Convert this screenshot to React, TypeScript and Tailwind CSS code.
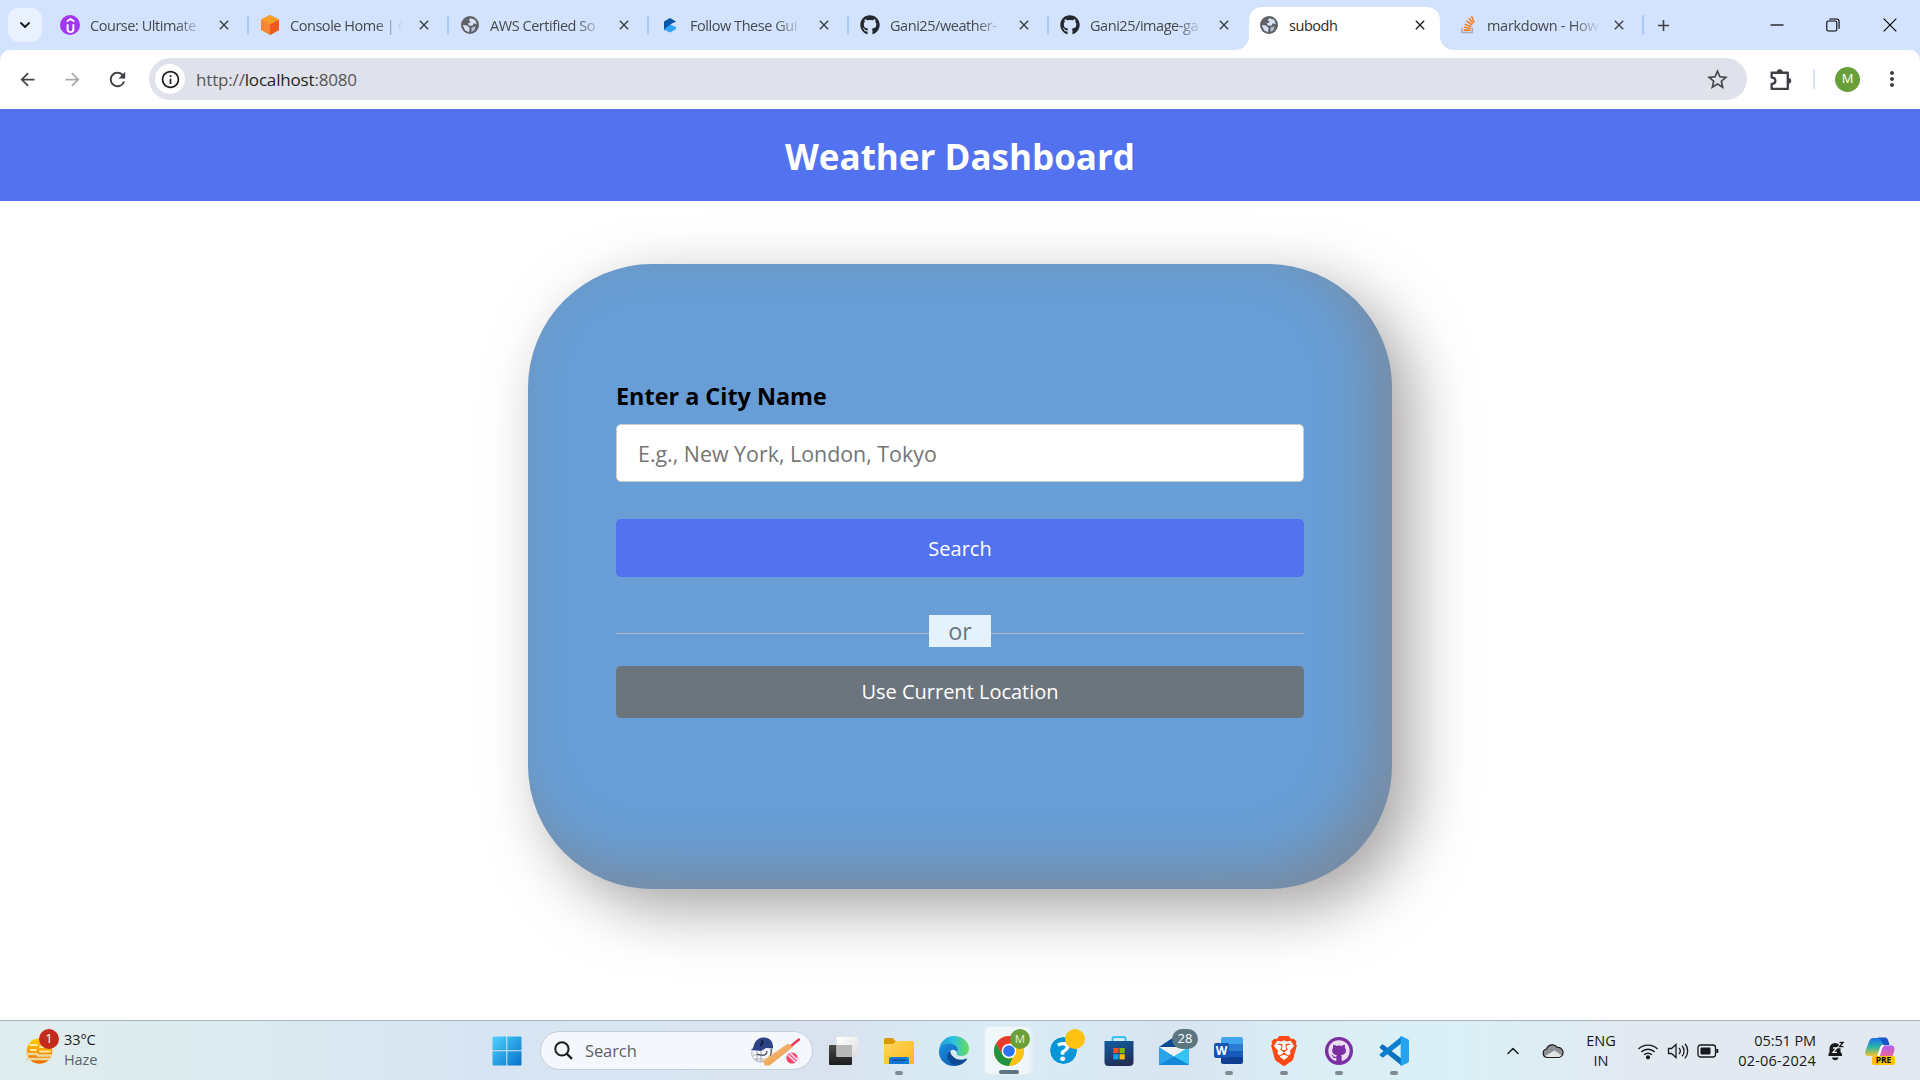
import React from 'react';
import {
  MdArrowBack,
  MdArrowForward,
  MdRefresh,
  MdInfoOutline,
  MdStarBorder,
  MdPublic,
  MdMoreVert,
  MdClose,
  MdAdd,
} from 'react-icons/md';
import { FaGithub } from 'react-icons/fa';
import { ChevronDown, ChevronUp } from 'lucide-react';
import { SiUdemy, SiBrave } from 'react-icons/si';

/* ---------- favicons ---------- */

function UdemyIcon() {
  return (
    <span className="flex size-5 items-center justify-center rounded-full bg-[#a435f0] text-white">
      <SiUdemy className="size-[15px]" />
    </span>
  );
}

function AwsBoxIcon() {
  return (
    <svg viewBox="0 0 20 20" className="size-5">
      <path d="M10 0 19 4.8V15L10 20 1 15V4.8Z" fill="#f58536" />
      <path d="M10 0 19 4.8 10 9.6 1 4.8Z" fill="#fd9b28" />
      <path d="M19 4.8V15L10 20V9.6Z" fill="#ef5a1c" />
    </svg>
  );
}

function GlobeIcon() {
  return (
    <svg viewBox="0 0 18 18" className="size-[18px]">
      <circle cx="9" cy="9" r="9" fill="#5f6368" />
      <path
        d="M9.200 2.200 14 3.800 15.800 8.200 12.500 7.200 11.500 9.800 8 9.400 6.800 7.200 9 6.800 9.400 5 7.600 4.600Z"
        fill="#d9e3f5"
      />
      <path d="M1.800 9 6 9.400 8.600 12 8 16.200 4 14.300Z" fill="#d9e3f5" />
      <path d="M10.500 11.500 14.500 10.500 13.500 14 10.500 16Z" fill="#d9e3f5" fillOpacity=".75" />
    </svg>
  );
}

function CodeIcon() {
  return (
    <svg viewBox="0 0 20 20" className="size-5">
      <path d="M10 3 16 6.500 11 9 9 13 4 15.500V6.500Z" fill="#0b55a5" />
      <path d="M16 12 10 9.600 4 14.500 10 17.500 16 14Z" fill="#2ea3fb" />
    </svg>
  );
}

function StackIcon() {
  return (
    <svg viewBox="0 0 20 20" className="size-5" fill="none">
      <path d="M3 12.500v5.500h11v-5.500" stroke="#a9adb1" strokeWidth="1.600" />
      <path
        d="M5 15.400h7.200M5.200 12.400l7.200.9M6 9.200l7 2.300M7.800 5.800l6.200 4M10.400 2.800l4.700 5.600M13.200.6l2.700 6.600"
        stroke="#f48024"
        strokeWidth="1.600"
      />
    </svg>
  );
}

function PuzzleIcon() {
  return (
    <svg viewBox="0 0 24 24" className="size-[25px]" fill="none" stroke="#3c3f43" strokeWidth="2.200" strokeLinejoin="round">
      <path d="M3.500 5.500H19V21H3.500V16.200c2.400 0 3.600-1.300 3.600-3s-1.200-3-3.600-3Z" />
      <path d="M9 5a2.300 2.300 0 0 1 4.600 0ZM19.500 11a2.300 2.300 0 0 1 0 4.600Z" fill="#3c3f43" stroke="#3c3f43" strokeWidth="1" />
    </svg>
  );
}

/* ---------- tab strip ---------- */

function Tab({
  icon,
  title,
  divider = true,
}: {
  icon: React.ReactNode;
  title: string;
  divider?: boolean;
}) {
  return (
    <div className="flex w-[200px] shrink-0 items-center pl-[13px]">
      <span className="flex w-[22px] shrink-0 justify-center">{icon}</span>
      <span className="mt-[2px] ml-[9px] w-[113px] shrink-0 text-[14.5px] tracking-[-0.45px] whitespace-nowrap text-[#46494d] [mask-image:linear-gradient(90deg,#000_76%,transparent_100%)]">
        {title}
      </span>
      <MdClose className="ml-[13px] size-4 shrink-0 text-[#3c3f43]" />
      {divider && <span className="ml-[15px] h-5 w-[2px] shrink-0 rounded bg-[#a8c7fa]" />}
    </div>
  );
}

function TabStrip() {
  return (
    <div className="flex h-[50px] bg-[#d3e2fd] pl-2">
      <div className="mt-2 flex h-[34px] w-[34px] shrink-0 items-center justify-center rounded-[11px] bg-[#e9f0fe]">
        <ChevronDown className="size-4 text-[#1f1f1f]" strokeWidth={3} />
      </div>
      <div className="ml-[4px] flex">
        <Tab icon={<UdemyIcon />} title="Course: Ultimate" />
        <Tab icon={<AwsBoxIcon />} title="Console Home | C" />
        <Tab icon={<GlobeIcon />} title="AWS Certified So" />
        <Tab icon={<CodeIcon />} title="Follow These Gui" />
        <Tab icon={<FaGithub className="size-5 text-[#24292f]" />} title="Gani25/weather-" />
        <Tab icon={<FaGithub className="size-5 text-[#24292f]" />} title="Gani25/image-ga" divider={false} />
      </div>
      {/* active tab with flared bottom corners */}
      <div className="flex w-[199px] shrink-0">
        <svg viewBox="0 0 14 14" className="-ml-[11px] size-[14px] shrink-0 self-end">
          <path d="M14 0V14H0A14 14 0 0 0 14 0Z" fill="#fff" />
        </svg>
        <div className="mt-[7px] flex w-[191px] shrink-0 items-center rounded-t-[13px] bg-white pb-[7px] pl-[11px]">
          <GlobeIcon />
          <span className="mt-[2px] ml-[11px] w-[113px] text-[14.5px] tracking-[-0.45px] text-[#27292c]">subodh</span>
          <MdClose className="ml-[10px] size-4 text-[#1f1f1f]" />
        </div>
        <svg viewBox="0 0 14 14" className="size-[14px] shrink-0 self-end">
          <path d="M0 0V14H14A14 14 0 0 1 0 0Z" fill="#fff" />
        </svg>
      </div>
      <div className="flex w-[199px] shrink-0 items-center pl-[14px]">
        <StackIcon />
        <span className="mt-[2px] ml-[9px] w-[113px] shrink-0 text-[14.5px] tracking-[-0.3px] whitespace-nowrap text-[#46494d] [mask-image:linear-gradient(90deg,#000_76%,transparent_100%)]">
          markdown - How
        </span>
        <MdClose className="ml-[11px] size-4 shrink-0 text-[#3c3f43]" />
        <span className="ml-[15px] h-5 w-[2px] shrink-0 rounded bg-[#a8c7fa]" />
      </div>
      <div className="flex w-[38px] items-center justify-center">
        <MdAdd className="size-[19px] text-[#3c3f43]" />
      </div>
      <div className="ml-auto flex items-center">
        <div className="flex w-[57px] justify-center">
          <svg viewBox="0 0 14 14" className="size-[14px]">
            <path d="M0.5 7h13" stroke="#000" strokeWidth="1.2" />
          </svg>
        </div>
        <div className="flex w-[56px] justify-center">
          <svg viewBox="0 0 14 14" className="size-[14px]" fill="none" stroke="#000" strokeWidth="1.1">
            <rect x="0.8" y="3" width="10" height="10" rx="1.6" />
            <path d="M3.3 1h7.2a2.6 2.6 0 0 1 2.6 2.6v7.2" />
          </svg>
        </div>
        <div className="mr-px flex w-[58px] justify-center">
          <svg viewBox="0 0 14 14" className="size-[14px]">
            <path d="M.7.7l12.6 12.6M13.3.7.7 13.3" stroke="#000" strokeWidth="1.1" />
          </svg>
        </div>
      </div>
    </div>
  );
}

function Toolbar() {
  return (
    <div className="bg-[#d3e2fd]">
      <div className="flex h-[58px] items-center rounded-t-[10px] bg-white pl-[17px]">
        <MdArrowBack className="size-[21px] text-[#43464a]" />
        <MdArrowForward className="ml-[24px] size-[21px] text-[#a9abad]" />
        <MdRefresh className="ml-[23px] size-[23px] text-[#3c3f43]" />
        <div className="ml-[20px] flex h-[42px] w-[1598px] items-center rounded-full bg-[#dfe2ea] pl-[6px]">
          <span className="flex size-[30px] items-center justify-center rounded-full bg-white">
            <MdInfoOutline className="size-[21px] text-[#1f1f1f]" />
          </span>
          <span className="mt-[2px] ml-[11px] text-[17px] tracking-[-0.17px] text-[#53565b]">
            http://<span className="text-[#1f1f1f]">localhost</span>:8080
          </span>
          <MdStarBorder className="mr-[17px] ml-auto size-[25px] text-[#43464a]" />
        </div>
        <span className="ml-[21px]">
          <PuzzleIcon />
        </span>
        <span className="ml-[20px] h-5 w-[2px] bg-[#d3e2fd]" />
        <span className="ml-[20px] flex size-[25px] items-center justify-center rounded-full bg-[#689f38] text-[13px] text-white">
          M
        </span>
        <MdMoreVert className="ml-[20px] size-[24px] text-[#3c3f43]" />
      </div>
    </div>
  );
}

/* ---------- page ---------- */

function WeatherPage() {
  return (
    <main className="flex h-[912px] flex-col items-center overflow-hidden bg-white">
      <h1 className="mt-px flex h-[92px] w-full items-center justify-center border-t border-[#4a74de] bg-[#5372f0] pt-[3px] text-[35px] font-bold text-white">
        Weather Dashboard
      </h1>
      <section className="mt-[63px] flex h-[625px] w-[864px] shrink-0 flex-col rounded-[124px] bg-[#689ed5] px-[88px] pt-[114px] shadow-[20px_20px_60px_rgba(129,126,126,0.7),inset_-20px_-20px_50px_rgba(131,127,127,0.6)]">
        <h3 className="flex h-[36px] items-center pt-[2px] text-[23.4px] font-bold text-black">Enter a City Name</h3>
        <div className="mt-[10px] flex h-[58px] items-center rounded-[5px] border border-[#ccc] bg-white pt-[2px] pl-[21px] text-[21.4px] text-[#757575]">
          E.g., New York, London, Tokyo
        </div>
        <button className="mt-[37px] h-[58px] shrink-0 rounded-[5px] bg-[#5372f0] pt-[2px] text-[20px] text-white">
          Search
        </button>
        <div className="mt-[38px] flex h-[32px] shrink-0 items-center">
          <span className="mt-[4px] h-px flex-1 bg-[#b0bccb]" />
          <span className="flex h-[32px] w-[62px] items-center justify-center bg-[#e3f2fd] pt-[2px] text-[23.4px] text-[#6c757d]">
            or
          </span>
          <span className="mt-[4px] h-px flex-1 bg-[#b0bccb]" />
        </div>
        <button className="mt-[19px] h-[52px] shrink-0 rounded-[5px] bg-[#6c757d] text-[20px] text-white">
          Use Current Location
        </button>
      </section>
    </main>
  );
}

/* ---------- taskbar ---------- */

function HazeIcon() {
  return (
    <svg viewBox="0 0 34 34" className="size-[34px]">
      <defs>
        <linearGradient id="haze" x1="0" y1="0" x2="0" y2="1">
          <stop offset="0" stopColor="#ffd000" />
          <stop offset="1" stopColor="#ef6c00" />
        </linearGradient>
      </defs>
      <circle cx="15.500" cy="18" r="12.800" fill="url(#haze)" />
      <path
        d="M6 12h7M16 14h9M7 17h5M16 18.500h10"
        stroke="#ffe7a6"
        strokeWidth="1.800"
        strokeLinecap="round"
      />
      <path d="M3 21h10M3 26h22M14 22.500h13" stroke="#ead8a0" strokeWidth="2.600" strokeLinecap="round" />
    </svg>
  );
}

function WindowsIcon() {
  return (
    <svg viewBox="0 0 30 30" className="size-[30px]">
      <defs>
        <linearGradient id="win" x1="0" y1="0" x2="1" y2="1">
          <stop offset="0" stopColor="#4fd3fb" />
          <stop offset="1" stopColor="#0670cc" />
        </linearGradient>
      </defs>
      <path
        d="M1.500.5H14.300V14.300H.5V1.500a1 1 0 0 1 1-1ZM15.300.5h13.200a1 1 0 0 1 1 1v12.800H15.300ZM.5 15.300h13.800v14.200H1.500a1 1 0 0 1-1-1ZM15.300 15.300h14.200v13.200a1 1 0 0 1-1 1H15.300Z"
        fill="url(#win)"
      />
    </svg>
  );
}

function CricketIcon() {
  return (
    <svg viewBox="0 0 50 30" className="h-[30px] w-[50px]">
      <defs>
        <linearGradient id="bat" x1="0" y1="0" x2="1" y2="1">
          <stop offset="0" stopColor="#ffcf8f" />
          <stop offset="1" stopColor="#e08a35" />
        </linearGradient>
      </defs>
      <path d="M2 15c-1 7 3 10 8 11l5-1M3 19h10M5 23h9M7 15v10M11 15v11" stroke="#a9aeb4" strokeWidth="1" fill="none" />
      <path d="M21 13c1 5-1 9-5 12M17 15c0 3-2 6-10 3" stroke="#3b3f46" strokeWidth="1.200" fill="none" />
      <path d="M.5 14C3 13 3 12 4 9 5.500 4 9 1.500 14 1.500c6 0 9.500 4.500 9 11L16 12 11 15Z" fill="#2b4286" />
      <path d="M12.500 5 11 9.500" stroke="#111a3c" strokeWidth="1.800" strokeLinecap="round" />
      <path d="M41 10 49 3.500" stroke="#e2384d" strokeWidth="2.400" strokeLinecap="round" />
      <path d="M13 24.500 38 7.500 43 11 19.500 29.500 14.500 29.500Z" fill="url(#bat)" />
      <circle cx="42" cy="22" r="5.600" fill="#f2455d" />
      <path d="M38 19l7.500 7M40 17l7.500 7" stroke="#f9c6ee" strokeWidth="1.800" />
    </svg>
  );
}

function TaskViewIcon() {
  return (
    <svg viewBox="0 0 30 30" className="size-[30px]">
      <defs>
        <linearGradient id="tv" x1="0" y1="0" x2="0" y2="1">
          <stop offset="0" stopColor="#4a4a4a" />
          <stop offset="1" stopColor="#1d1d1d" />
        </linearGradient>
        <linearGradient id="tvFront" x1="0" y1="0" x2="1" y2="1">
          <stop offset="0" stopColor="#ffffff" />
          <stop offset="1" stopColor="#dedede" />
        </linearGradient>
      </defs>
      <rect x="0" y="9" width="23" height="20" rx="1" fill="url(#tv)" />
      <rect x="7.500" y="1" width="22" height="20" rx="1" fill="url(#tvFront)" />
      <path d="M7.500 9H23v12H7.500Z" fill="#b9b9b9" />
    </svg>
  );
}

function ExplorerIcon() {
  return (
    <svg viewBox="0 0 30 30" className="size-[30px]">
      <defs>
        <linearGradient id="folder" x1="0" y1="0" x2="1" y2="1">
          <stop offset="0" stopColor="#ffd75e" />
          <stop offset="1" stopColor="#f9b81a" />
        </linearGradient>
      </defs>
      <path d="M0 3.500A1.500 1.500 0 0 1 1.500 2h7.300L12 5.500 10 9H0Z" fill="#de9a05" />
      <path d="M0 8h9l3-3h16.500A1.500 1.500 0 0 1 30 6.500V28H0Z" fill="url(#folder)" />
      <path d="M5 28v-5a2 2 0 0 1 2-2h16a2 2 0 0 1 2 2v5Z" fill="#1278d3" />
      <path d="M9 24.300h12" stroke="#0c4c93" strokeWidth="1.600" strokeLinecap="round" />
    </svg>
  );
}

function EdgeIcon() {
  return (
    <svg viewBox="0 0 30 30" className="size-[30px]">
      <defs>
        <linearGradient id="edgeTop" x1="0" y1="0.3" x2="1" y2="0.3">
          <stop offset="0" stopColor="#1f9ede" />
          <stop offset=".5" stopColor="#2fc2df" />
          <stop offset="1" stopColor="#66e24f" />
        </linearGradient>
        <linearGradient id="edgeLow" x1="0" y1="0" x2="0.6" y2="1">
          <stop offset="0" stopColor="#1d8fe0" />
          <stop offset="1" stopColor="#1064bd" />
        </linearGradient>
      </defs>
      <path
        d="M0 15C.5 6 7 0 15 0c9 0 15 6.300 15 12.500 0 5-3.500 7.500-7.500 7.500-3.500 0-5-1.300-5-2.300 0-.9 1.400-1.500 1.400-3.700 0-2.600-2.600-5-6.400-5C6.500 9 1.500 12 0 15Z"
        fill="url(#edgeTop)"
      />
      <path
        d="M0 15c1-5 6-8 11-7.500 3.500.3 7.800 3 7.900 6.500 0 1-.4 1.800-.9 2.400-1-2-3-3-5.200-2.400-2.500.8-4 3.500-3.300 6.500C10.600 26 16 29.500 20 29c-2 .7-3.500 1-5 1C6 30-.5 23 0 15Z"
        fill="url(#edgeLow)"
      />
      <path
        d="M11.500 14.500c-3.500 2.500-4 7-1.500 10.500s7 5 10.500 4c3-.9 5.800-3 7.500-5.800.3-.5-.2-.9-.7-.6-4.500 2.300-10 1.300-13.300-2-1.800-1.800-3-4-2.500-6.100Z"
        fill="#0d4a91"
      />
    </svg>
  );
}

function ChromeIcon() {
  return (
    <svg viewBox="0 0 30 30" className="size-[30px]">
      <circle cx="15" cy="15" r="15" fill="#fbc116" />
      <path d="M15 0A15 15 0 0 1 28 7.500H15L8.500 18.750 2 7.500A15 15 0 0 1 15 0Z" fill="#e33b2e" />
      <path d="M2 7.500 8.500 18.750a7.500 7.500 0 0 0 10 2.800L15 30A15 15 0 0 1 2 7.500Z" fill="#229342" />
      <path d="M21.500 18.750 15 30a15 15 0 0 0 13-22.500H15Z" fill="#fbc116" />
      <circle cx="15" cy="15" r="7.300" fill="#fff" />
      <circle cx="15" cy="15" r="5.800" fill="#2c75ee" />
    </svg>
  );
}

function HelpIcon() {
  return (
    <span className="flex size-[29px] items-center justify-center rounded-full border-[1.5px] border-white bg-[#0696d7] text-[27px] leading-none font-bold text-white">
      ?
    </span>
  );
}

function StoreIcon() {
  return (
    <svg viewBox="0 0 30 30" className="size-[30px]">
      <defs>
        <linearGradient id="store" x1="0" y1="0" x2="0.3" y2="1">
          <stop offset="0" stopColor="#115c9f" />
          <stop offset="1" stopColor="#223058" />
        </linearGradient>
      </defs>
      <path d="M8.500 6V2.200a1 1 0 0 1 1-1h11a1 1 0 0 1 1 1V6" stroke="#22bdf2" strokeWidth="1.700" fill="none" />
      <path d="M.5 5h29v21a4 4 0 0 1-4 4h-21a4 4 0 0 1-4-4Z" fill="url(#store)" />
      <path d="M9.300 12h5.200v5.200H9.300Z" fill="#f25022" />
      <path d="M15.500 12h5.200v5.200h-5.200Z" fill="#7fba00" />
      <path d="M9.300 18.200h5.200v5.200H9.300Z" fill="#00a4ef" />
      <path d="M15.500 18.200h5.200v5.200h-5.200Z" fill="#ffb900" />
    </svg>
  );
}

function MailIcon() {
  return (
    <svg viewBox="0 0 30 30" className="size-[30px]">
      <path d="M0 11 15 1 30 11Z" fill="#0a4a93" />
      <path d="M2 11h26v10L15 25 2 20Z" fill="#f1f1f1" />
      <path d="M0 11 15 20.500 30 11V29H0Z" fill="#2aa3e8" />
      <path d="M30 11V29L12 19l3 1.500Z" fill="#35c3f3" />
      <path d="M0 29 15 20.500 30 29Z" fill="#1487d8" />
    </svg>
  );
}

function WordIcon() {
  return (
    <span className="relative flex h-[27px] w-[29px] justify-end">
      <span className="grid w-[22px] grid-rows-4 overflow-hidden rounded-[2px]">
        <span className="bg-[#41a5ee]" />
        <span className="bg-[#2b7cd3]" />
        <span className="bg-[#185abd]" />
        <span className="bg-[#103f91]" />
      </span>
      <span className="absolute top-[6px] left-0 flex size-[15px] items-center justify-center rounded-[2px] bg-[#1753b4] text-[12px] font-bold text-white">
        W
      </span>
    </span>
  );
}

function BraveIcon() {
  return (
    <svg viewBox="0 0 24 24" className="size-[30px]">
      <path d="M6 5h12l1 8-4 6-3 2-3-2-4-6Z" fill="#fff" />
      <SiBrave size={24} color="#fb4a17" />
    </svg>
  );
}

function GitHubDesktopIcon() {
  return (
    <span className="flex size-[28px] items-center justify-center rounded-full bg-[#7b2fa3]">
      <FaGithub className="size-[22px] text-[#eadff2]" />
    </span>
  );
}

function VsCodeIcon() {
  return (
    <svg viewBox="0 0 30 30" className="size-[30px]">
      <path d="M1 10.500 3 8.700c.5-.4 1-.4 1.500 0L23 23v7L.9 12c-.5-.5-.5-1 .1-1.500Z" fill="#0a6fbe" />
      <path d="M1 19.500 3 21.300c.5.4 1 .4 1.500 0L23 7V0L.9 18c-.5.5-.5 1 .1 1.500Z" fill="#0a7fd0" />
      <path d="M22 0 28.500 3A2.500 2.500 0 0 1 30 5.200V24.800A2.500 2.500 0 0 1 28.500 27L22 30c-.7 0-.3-.4-.3-1V1c0-.6-.4-1 .3-1Z" fill="#26a4f0" />
    </svg>
  );
}

function TaskApp({ children, dot = false }: { children: React.ReactNode; dot?: boolean }) {
  return (
    <div className="relative flex h-[59px] w-[55px] shrink-0 items-center justify-center">
      {children}
      {dot && <span className="absolute bottom-[5px] h-[4px] w-[8px] rounded-full bg-[#7f8a91]" />}
    </div>
  );
}

function Tray() {
  return (
    <div className="ml-auto flex h-full items-center text-[#17191c]">
      <ChevronUp className="size-[20px]" strokeWidth={1.8} />
      <svg viewBox="0 0 22 16" className="ml-[19px] h-[16px] w-[22px]">
        <path
          d="M5.500 14.500A4.300 4.300 0 0 1 4.600 6 6 6 0 0 1 15.300 4.500 5 5 0 0 1 16.800 14.500Z"
          fill="#8d9195"
          stroke="#1c1d1f"
          strokeWidth="1.200"
        />
        <path d="M3 13 12.500 7.500 19.500 12.500 16.800 14H5.500Z" fill="#e3e3e3" />
      </svg>
      <div className="ml-[15px] flex w-[44px] flex-col items-center text-[14.500px] leading-[20px]">
        <span>ENG</span>
        <span>IN</span>
      </div>
      <svg viewBox="0 0 22 18" className="ml-[14px] h-[18px] w-[22px]" fill="none" stroke="currentColor" strokeWidth="1.400">
        <path d="M1.500 7a13.500 13.500 0 0 1 19 0M4.300 10a9.500 9.500 0 0 1 13.400 0M7.200 12.800a5.500 5.500 0 0 1 7.600 0" />
        <circle cx="11" cy="15.300" r="1.400" fill="currentColor" />
      </svg>
      <svg viewBox="0 0 22 18" className="ml-[8px] h-[18px] w-[22px]" fill="none" stroke="currentColor" strokeWidth="1.300">
        <path d="M1.500 6.500h3L9 2.500v13l-4.500-4h-3ZM12 6a4.500 4.500 0 0 1 0 6M15 3.800a7.500 7.500 0 0 1 0 10.400M18 1.800a11 11 0 0 1 0 14.400" />
      </svg>
      <svg viewBox="0 0 22 14" className="ml-[8px] h-[14px] w-[22px]" fill="none" stroke="currentColor" strokeWidth="1.300">
        <rect x="1" y="1" width="17.500" height="12" rx="2.500" />
        <rect x="3.500" y="3.500" width="10" height="7" rx="1" fill="currentColor" stroke="none" />
        <path d="M20.300 5v4" strokeWidth="2" />
      </svg>
      <div className="ml-[18px] flex w-[79px] flex-col items-end text-[14.500px] leading-[20px] whitespace-nowrap">
        <span className="tracking-[-0.1px]">05:51 PM</span>
        <span className="tracking-[0.22px]">02-06-2024</span>
      </div>
      <svg viewBox="0 0 20 20" className="ml-[10px] size-5">
        <path d="M2.500 15V13L3.500 11V7.500a5.500 5.500 0 0 1 11 0V11l1.500 2v2ZM6 16.500h6.500a3.300 3.300 0 0 1-6.500 0Z" fill="#17191c" />
        <path d="M13.500 1.500h3.700l-3.700 4.200h4" stroke="#eef3f7" strokeWidth="3" fill="none" />
        <path d="M7 7h3.800L7 11.300h4" stroke="#eef3f7" strokeWidth="1.300" fill="none" />
        <path d="M13.500 1.500h3.700l-3.700 4.200h4" stroke="#17191c" strokeWidth="1.300" fill="none" />
      </svg>
      <div className="relative mr-[25px] ml-[19px] flex h-[30px] w-[30px]">
        <svg viewBox="0 0 30 30" className="size-[30px]">
          <defs>
            <linearGradient id="cpA" x1="0" y1="0" x2="0" y2="1">
              <stop offset="0" stopColor="#1b6ff2" />
              <stop offset=".5" stopColor="#2bb5a8" />
              <stop offset="1" stopColor="#f5c52c" />
            </linearGradient>
            <linearGradient id="cpB" x1="0" y1="0" x2="0" y2="1">
              <stop offset="0" stopColor="#b55ff0" />
              <stop offset="1" stopColor="#f5658c" />
            </linearGradient>
          </defs>
          <path d="M8.500 2h11.500c1.700 0 2.500 1.200 3 3l1 4h-5c-1.800 0-2.500 1-3 3l-2.500 8H3C.5 20-.3 18 .3 15.500L4 5.500C5 3 6 2 8.500 2Z" fill="url(#cpA)" />
          <path d="M19 9.500h7c2.800 0 4 2 3.300 5L27 22H14.500L17 12c.4-1.600 1-2.500 2-2.500Z" fill="url(#cpB)" />
          <path d="M12 1.500h8c2 0 3 2 3.500 4L24.500 9h-6L15 2.500Z" fill="#1557c9" />
          <path d="M18.500 9.500c-2 .5-2.500 2-3 4L13 20.500" stroke="#fff" strokeWidth="2.200" fill="none" />
        </svg>
        <span className="absolute right-0 bottom-[1px] flex h-[9px] w-[23px] items-center justify-center rounded-[2px] bg-[#fcc500] text-[8.500px] font-bold text-black">
          PRE
        </span>
      </div>
    </div>
  );
}

function Taskbar() {
  return (
    <footer className="flex h-[60px] items-center border-t border-[#a9b3bd] bg-[linear-gradient(90deg,#e0edee_0%,#dcebf0_12%,#d7e5f3_25%,#d9e5f2_35%,#d9e2ee_43%,#d8ebf4_49%,#d9eaf4_56%,#d8e4f0_61%,#dbeef5_68%,#daf0f6_76%,#e2e9f1_85%,#e4e9f1_100%)]">
      <div className="flex w-[490px] items-center pb-[2px] pl-[24px]">
        <div className="relative">
          <HazeIcon />
          <span className="absolute -top-[4px] left-[15px] flex size-5 items-center justify-center rounded-full bg-[#c42b1c] text-[13px] text-white">
            1
          </span>
        </div>
        <div className="ml-[6px] flex flex-col text-[14.500px] leading-[20px] tracking-[-0.1px]">
          <span className="text-[#17191c]">33°C</span>
          <span className="text-[#5c6266]">Haze</span>
        </div>
      </div>
      <div className="ml-[2px] flex w-[48px] items-center">
        <WindowsIcon />
      </div>
      <div className="flex h-[39px] w-[273px] items-center rounded-full border border-[#c5cedb] bg-[#f4f8fc] pl-[13px]">
        <svg viewBox="0 0 18 18" className="size-[19px]" fill="none" stroke="#1d1d1f" strokeWidth="1.900">
          <circle cx="7.500" cy="7.500" r="6.300" />
          <path d="m12 12 5 5" strokeWidth="2.200" />
        </svg>
        <span className="mt-px ml-[12px] text-[16.500px] tracking-[-0.1px] text-[#5d6063]">Search</span>
        <span className="mr-[12px] ml-auto">
          <CricketIcon />
        </span>
      </div>
      <div className="ml-[3px] flex">
        <TaskApp>
          <TaskViewIcon />
        </TaskApp>
        <TaskApp dot>
          <ExplorerIcon />
        </TaskApp>
        <TaskApp>
          <EdgeIcon />
        </TaskApp>
        <TaskApp>
          <span className="relative flex h-[49px] w-[49px] items-center justify-center rounded-[5px] border border-[#e4ecf2] bg-[#e6f1f7]">
            <span className="absolute top-0 left-0 h-[47px] w-[44px] rounded-[5px] bg-[#f0f7fb]" />
            <span className="relative">
              <ChromeIcon />
            </span>
            <span className="absolute top-[2px] right-[2px] flex size-5 items-center justify-center rounded-full bg-[#689f38] text-[11.500px] text-[#e3efd8]">
              M
            </span>
            <span className="absolute bottom-0 h-[4px] w-[20px] rounded-full bg-[#5c7484]" />
          </span>
        </TaskApp>
        <TaskApp>
          <HelpIcon />
          <span className="absolute top-[8px] right-[6px] size-5 rounded-full bg-[#ffc20e]" />
        </TaskApp>
        <TaskApp>
          <StoreIcon />
        </TaskApp>
        <TaskApp>
          <MailIcon />
          <span className="absolute top-[8px] right-[3px] flex h-5 w-[26px] items-center justify-center rounded-full bg-[#5c7581] text-[13px] text-white">
            28
          </span>
        </TaskApp>
        <TaskApp dot>
          <WordIcon />
        </TaskApp>
        <TaskApp dot>
          <BraveIcon />
        </TaskApp>
        <TaskApp dot>
          <GitHubDesktopIcon />
        </TaskApp>
        <TaskApp dot>
          <VsCodeIcon />
        </TaskApp>
      </div>
      <Tray />
    </footer>
  );
}

export default function App() {
  return (
    <div className="flex h-[1080px] w-[1920px] flex-col overflow-hidden bg-white font-['Open_Sans',sans-serif]">
      <TabStrip />
      <Toolbar />
      <WeatherPage />
      <Taskbar />
    </div>
  );
}
